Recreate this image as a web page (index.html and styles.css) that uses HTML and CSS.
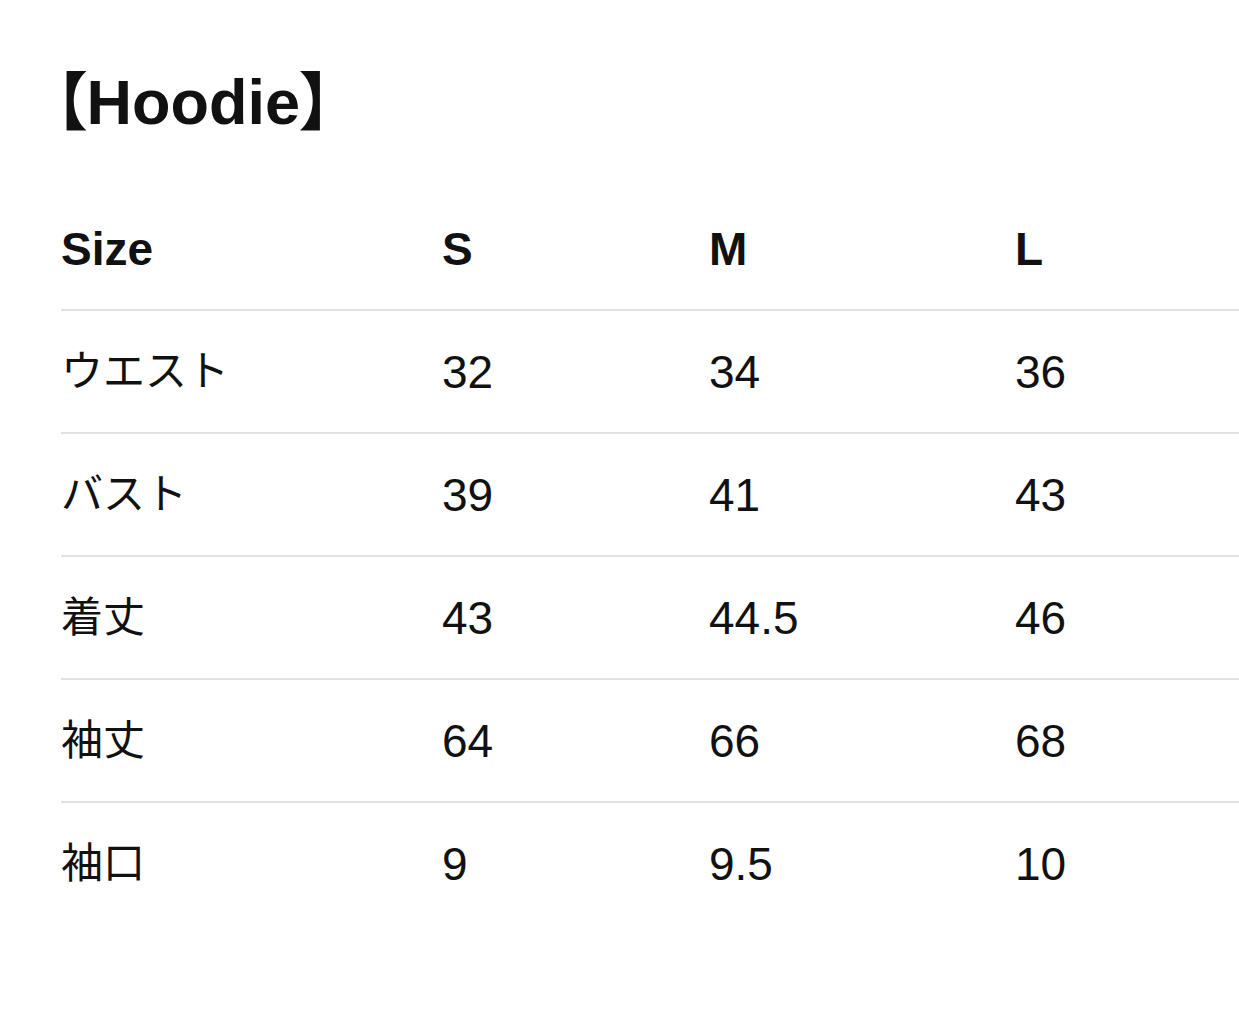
FILE: index.html
```html
<!DOCTYPE html>
<html lang="ja">
<head>
<meta charset="utf-8">
<title>Hoodie Size</title>
<link rel="stylesheet" href="styles.css">
</head>
<body>
<main class="page">
  <h1 class="title">【Hoodie】</h1>
  <div class="size-table">
    <div class="row head">
      <div class="cell">Size</div><div class="cell">S</div><div class="cell">M</div><div class="cell">L</div>
    </div>
    <div class="row">
      <div class="cell ja">ウエスト</div><div class="cell">32</div><div class="cell">34</div><div class="cell">36</div>
    </div>
    <div class="row">
      <div class="cell ja">バスト</div><div class="cell">39</div><div class="cell">41</div><div class="cell">43</div>
    </div>
    <div class="row">
      <div class="cell ja">着丈</div><div class="cell">43</div><div class="cell">44.5</div><div class="cell">46</div>
    </div>
    <div class="row">
      <div class="cell ja">袖丈</div><div class="cell">64</div><div class="cell">66</div><div class="cell">68</div>
    </div>
    <div class="row last">
      <div class="cell ja">袖口</div><div class="cell">9</div><div class="cell">9.5</div><div class="cell">10</div>
    </div>
  </div>
</main>
</body>
</html>
```

FILE: styles.css
```css
html, body {
  margin: 0;
  padding: 0;
  background: #ffffff;
}

body {
  font-family: "Liberation Sans", "Noto Sans CJK JP", sans-serif;
  color: #111111;
  overflow: hidden;
}

.page {
  padding: 70px 0 0 61px;
}

.title {
  margin: 0 0 0 -6px;
  font-size: 63px;
  line-height: 64px;
  font-weight: 700;
  font-feature-settings: "palt";
}

.size-table {
  margin-top: 54px;
  width: 1178px;
  display: flex;
  flex-direction: column;
}

.row {
  display: grid;
  grid-template-columns: 381px 267px 306px 1fr;
  height: 121px;
  border-bottom: 2px solid #e2e2e2;
  align-items: center;
  font-size: 46px;
  line-height: 46px;
}

.row.head {
  font-weight: 700;
}

.row.last {
  border-bottom: none;
}

.cell {
  white-space: nowrap;
}

.cell.ja {
  font-size: 42px;
}
```
